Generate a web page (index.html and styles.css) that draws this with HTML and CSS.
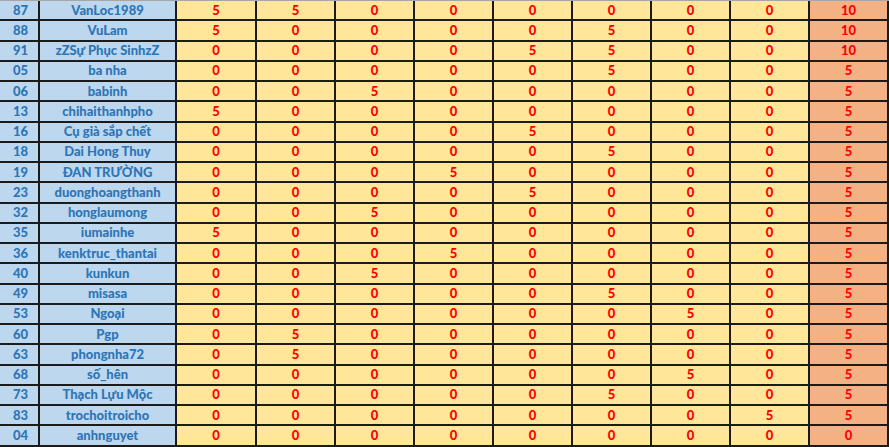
FILE: index.html
```html
<!DOCTYPE html>
<html>
<head>
<meta charset="utf-8">
<link rel="stylesheet" href="styles.css">
</head>
<body>
<table class="sheet">
<colgroup>
<col class="c-id"><col class="c-name"><col class="c-first"><col class="c-num"><col class="c-num"><col class="c-num"><col class="c-num"><col class="c-num"><col class="c-num"><col class="c-num"><col class="c-total">
</colgroup>
<tbody>
<tr><td class="id">87</td><td class="name">VanLoc1989</td><td>5</td><td>5</td><td>0</td><td>0</td><td>0</td><td>0</td><td>0</td><td>0</td><td class="total">10</td></tr>
<tr><td class="id">88</td><td class="name">VuLam</td><td>5</td><td>0</td><td>0</td><td>0</td><td>0</td><td>5</td><td>0</td><td>0</td><td class="total">10</td></tr>
<tr><td class="id">91</td><td class="name">zZSự Phục SinhzZ</td><td>0</td><td>0</td><td>0</td><td>0</td><td>5</td><td>5</td><td>0</td><td>0</td><td class="total">10</td></tr>
<tr><td class="id">05</td><td class="name">ba nha</td><td>0</td><td>0</td><td>0</td><td>0</td><td>0</td><td>5</td><td>0</td><td>0</td><td class="total">5</td></tr>
<tr><td class="id">06</td><td class="name">babinh</td><td>0</td><td>0</td><td>5</td><td>0</td><td>0</td><td>0</td><td>0</td><td>0</td><td class="total">5</td></tr>
<tr><td class="id">13</td><td class="name">chihaithanhpho</td><td>5</td><td>0</td><td>0</td><td>0</td><td>0</td><td>0</td><td>0</td><td>0</td><td class="total">5</td></tr>
<tr><td class="id">16</td><td class="name">Cụ già sắp chết</td><td>0</td><td>0</td><td>0</td><td>0</td><td>5</td><td>0</td><td>0</td><td>0</td><td class="total">5</td></tr>
<tr><td class="id">18</td><td class="name">Dai Hong Thuy</td><td>0</td><td>0</td><td>0</td><td>0</td><td>0</td><td>5</td><td>0</td><td>0</td><td class="total">5</td></tr>
<tr><td class="id">19</td><td class="name">ĐAN TRƯỜNG</td><td>0</td><td>0</td><td>0</td><td>5</td><td>0</td><td>0</td><td>0</td><td>0</td><td class="total">5</td></tr>
<tr><td class="id">23</td><td class="name">duonghoangthanh</td><td>0</td><td>0</td><td>0</td><td>0</td><td>5</td><td>0</td><td>0</td><td>0</td><td class="total">5</td></tr>
<tr><td class="id">32</td><td class="name">honglaumong</td><td>0</td><td>0</td><td>5</td><td>0</td><td>0</td><td>0</td><td>0</td><td>0</td><td class="total">5</td></tr>
<tr><td class="id">35</td><td class="name">iumainhe</td><td>5</td><td>0</td><td>0</td><td>0</td><td>0</td><td>0</td><td>0</td><td>0</td><td class="total">5</td></tr>
<tr><td class="id">36</td><td class="name">kenktruc_thantai</td><td>0</td><td>0</td><td>0</td><td>5</td><td>0</td><td>0</td><td>0</td><td>0</td><td class="total">5</td></tr>
<tr><td class="id">40</td><td class="name">kunkun</td><td>0</td><td>0</td><td>5</td><td>0</td><td>0</td><td>0</td><td>0</td><td>0</td><td class="total">5</td></tr>
<tr><td class="id">49</td><td class="name">misasa</td><td>0</td><td>0</td><td>0</td><td>0</td><td>0</td><td>5</td><td>0</td><td>0</td><td class="total">5</td></tr>
<tr><td class="id">53</td><td class="name">Ngoại</td><td>0</td><td>0</td><td>0</td><td>0</td><td>0</td><td>0</td><td>5</td><td>0</td><td class="total">5</td></tr>
<tr><td class="id">60</td><td class="name">Pgp</td><td>0</td><td>5</td><td>0</td><td>0</td><td>0</td><td>0</td><td>0</td><td>0</td><td class="total">5</td></tr>
<tr><td class="id">63</td><td class="name">phongnha72</td><td>0</td><td>5</td><td>0</td><td>0</td><td>0</td><td>0</td><td>0</td><td>0</td><td class="total">5</td></tr>
<tr><td class="id">68</td><td class="name">số_hên</td><td>0</td><td>0</td><td>0</td><td>0</td><td>0</td><td>0</td><td>5</td><td>0</td><td class="total">5</td></tr>
<tr><td class="id">73</td><td class="name">Thạch Lựu Mộc</td><td>0</td><td>0</td><td>0</td><td>0</td><td>0</td><td>5</td><td>0</td><td>0</td><td class="total">5</td></tr>
<tr><td class="id">83</td><td class="name">trochoitroicho</td><td>0</td><td>0</td><td>0</td><td>0</td><td>0</td><td>0</td><td>0</td><td>5</td><td class="total">5</td></tr>
<tr><td class="id">04</td><td class="name">anhnguyet</td><td>0</td><td>0</td><td>0</td><td>0</td><td>0</td><td>0</td><td>0</td><td>0</td><td class="total">0</td></tr>
<tr class="cut"><td class="id"></td><td class="name"></td><td></td><td></td><td></td><td></td><td></td><td></td><td></td><td></td><td class="total"></td></tr>
</tbody>
</table>
</body>
</html>
```
FILE: styles.css
```css
html, body {
  margin: 0;
  padding: 0;
  background: #ececec;
  overflow: hidden;
}
body {
  border-top: 1px solid #a6a6a6;
}
.sheet {
  border-collapse: collapse;
  table-layout: fixed;
  width: 889px;
  margin-left: -1px;
  font-family: Lato, "Liberation Sans", sans-serif;
  font-weight: 900;
  font-size: 13px;
}
.c-id { width: 40px; }
.c-name { width: 137px; }
.c-first { width: 80px; }
.c-num { width: 79px; }
.c-total { width: 79px; }
.sheet td {
  height: 20.25px;
  padding: 0;
  box-sizing: border-box;
  border: 2px solid #1b1b1b;
  text-align: center;
  vertical-align: middle;
  background: #ffe699;
  color: #ff0000;
  line-height: 1;
  white-space: nowrap;
  overflow: hidden;
}
.sheet tr:first-child td {
  border-top: none;
  height: 19.25px;
}
.sheet td.id {
  border-left: none;
  padding-left: 4px;
  background: #bdd7ee;
  color: #2e75b6;
}
.sheet td.name {
  background: #bdd7ee;
  color: #2e75b6;
}
.sheet td.total {
  background: #f4b183;
}
```
